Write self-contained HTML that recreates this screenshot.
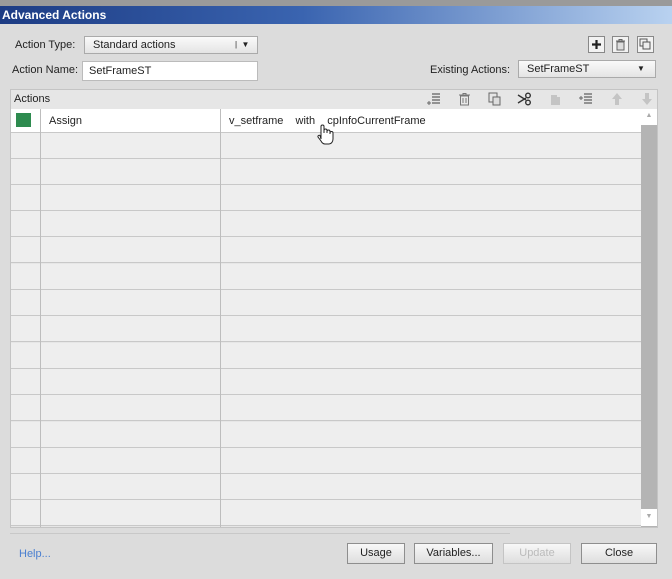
<!DOCTYPE html>
<html><head><style>
body{margin:0;width:672px;height:579px;background:#dcdcdc;font-family:"Liberation Sans",sans-serif;font-size:11px;color:#222;position:relative;overflow:hidden}
.a{position:absolute}
.top{left:0;top:0;width:672px;height:6px;background:#9a9a9a}
.title{left:0;top:6px;width:672px;height:18px;background:linear-gradient(90deg,#1d3c84 0%,#3a64b0 45%,#b9d2f0 100%);color:#fff;font-weight:bold;font-size:12px;line-height:18px;padding-left:2px;box-sizing:border-box}
.box{background:#fff;border:1px solid #bbb;box-sizing:border-box;line-height:18px;padding-left:6px}
.drop{background:linear-gradient(#fafafa,#e4e4e4);border:1px solid #aaa;box-sizing:border-box;line-height:16px;padding-left:8px}
.btn{background:linear-gradient(#f8f8f8,#dedede);border:1px solid #8e8e8e;box-sizing:border-box;text-align:center;line-height:19px;font-size:11px}
.row{left:11px;width:630px;height:26px;border-bottom:1px solid #c8c8c8;box-sizing:border-box;background:#eeeeee}
.ib{width:17px;height:17px;border:1px solid #888;background:#f2f2f2;box-sizing:border-box}
svg.ic{position:absolute;top:92px}
</style></head><body>
<div class="a top"></div>
<div class="a title">Advanced Actions</div>
<div class="a" style="left:15px;top:38px;line-height:14px">Action Type:</div>
<div class="a drop" style="left:84px;top:36px;width:174px;height:18px">Standard actions<span style="position:absolute;left:150px;font-size:8px">|&nbsp;&nbsp;▼</span></div>
<div class="a" style="left:12px;top:64px">Action Name:</div>
<div class="a box" style="left:82px;top:61px;width:176px;height:20px">SetFrameST</div>
<div class="a ib" style="left:588px;top:36px"><svg width="15" height="15"><path d="M7.5 3v9M3 7.5h9" stroke="#222" stroke-width="2.2"/></svg></div>
<div class="a ib" style="left:612px;top:36px"><svg width="15" height="15"><path d="M3 4h9M6 4V2.5h3V4M4 5h7v8H4z" stroke="#666" fill="#ddd"/></svg></div>
<div class="a ib" style="left:637px;top:36px"><svg width="15" height="15"><rect x="2" y="2" width="7" height="7" fill="none" stroke="#555"/><rect x="5" y="5" width="7" height="7" fill="#eee" stroke="#555"/></svg></div>
<div class="a" style="left:430px;top:64px">Existing Actions:</div>
<div class="a drop" style="left:518px;top:60px;width:138px;height:18px">SetFrameST<span style="position:absolute;left:118px;font-size:8px">▼</span></div>
<div class="a" style="left:10px;top:89px;width:648px;height:439px;border:1px solid #c4c4c4;background:#e6e6e6;box-sizing:border-box"></div>
<div class="a" style="left:14px;top:93px">Actions</div>
<svg class="ic" style="left:426px" width="16" height="14"><path d="M1 11h4M3 9v4" stroke="#666"/><path d="M6 2h8M6 5h8M6 8h8M6 11h8" stroke="#777" stroke-width="1.5"/></svg>
<svg class="ic" style="left:457px" width="16" height="14"><path d="M2 3h11M6 3V1.5h3V3M3.5 4h8v9h-8z" stroke="#777" fill="#e8e8e8"/><path d="M6 6v5M9 6v5" stroke="#777"/></svg>
<svg class="ic" style="left:487px" width="16" height="14"><rect x="2" y="1" width="8" height="9" fill="none" stroke="#666"/><rect x="6" y="5" width="7" height="8" fill="#ddd" stroke="#666"/></svg>
<svg class="ic" style="left:517px" width="16" height="14"><circle cx="11" cy="3.5" r="2.3" fill="none" stroke="#333" stroke-width="1.4"/><circle cx="11" cy="10.5" r="2.3" fill="none" stroke="#333" stroke-width="1.4"/><path d="M1 3l8 5M1 11l8-5" stroke="#333" stroke-width="1.4"/></svg>
<svg class="ic" style="left:548px" width="16" height="14"><path d="M3 3h6v2h3v8H3z" fill="#c4c4c4"/></svg>
<svg class="ic" style="left:578px" width="16" height="14"><path d="M1 6h4M3 4v4" stroke="#666"/><path d="M6 2h8M6 5h8M6 8h8M6 11h8" stroke="#777" stroke-width="1.5"/></svg>
<svg class="ic" style="left:609px" width="16" height="14"><path d="M8 1l5 6H10v6H6V7H3z" fill="#c4c4c4"/></svg>
<svg class="ic" style="left:639px" width="16" height="14"><path d="M8 13l5-6H10V1H6v6H3z" fill="#c4c4c4"/></svg>
<div class="a row" style="top:109px;height:24px;background:#fff"></div>
<div class="a" style="left:16px;top:113px;width:15px;height:14px;background:#2e8b4f"></div>
<div class="a" style="left:49px;top:115px">Assign</div>
<div class="a" style="left:229px;top:115px;word-spacing:3px">v_setframe&nbsp; with&nbsp; cpInfoCurrentFrame</div>
<div class="a row" style="top:133px"></div><div class="a row" style="top:159px"></div><div class="a row" style="top:185px"></div><div class="a row" style="top:211px"></div><div class="a row" style="top:237px"></div><div class="a row" style="top:264px"></div><div class="a row" style="top:290px"></div><div class="a row" style="top:316px"></div><div class="a row" style="top:343px"></div><div class="a row" style="top:369px"></div><div class="a row" style="top:395px"></div><div class="a row" style="top:422px"></div><div class="a row" style="top:448px"></div><div class="a row" style="top:474px"></div><div class="a row" style="top:500px"></div>
<div class="a" style="left:40px;top:109px;width:1px;height:418px;background:#bdbdbd"></div>
<div class="a" style="left:220px;top:109px;width:1px;height:418px;background:#bdbdbd"></div>
<svg class="a" style="left:314px;top:121px" width="22" height="26"><path d="M7 18V5.5a1.5 1.5 0 0 1 3 0V12V9.5a1.5 1.5 0 0 1 3 0V12v-1.5a1.5 1.5 0 0 1 3 0V13v-1a1.5 1.5 0 0 1 3 0v6c0 3-2 5-4 5h-4c-2 0-3-1-4-3l-3-4a1.3 1.3 0 0 1 2-1.5z" fill="#fff" stroke="#222"/></svg>
<div class="a" style="left:641px;top:109px;width:16px;height:418px;background:#b4b4b4"></div>
<div class="a" style="left:641px;top:109px;width:16px;height:16px;background:#fff;font-size:7px;color:#aaa;text-align:center;line-height:14px">▲</div>
<div class="a" style="left:641px;top:509px;width:16px;height:17px;background:#fff;font-size:7px;color:#aaa;text-align:center;line-height:16px">▼</div>
<div class="a" style="left:10px;top:533px;width:500px;height:1px;background:#c8c8c8"></div>
<div class="a" style="left:19px;top:548px;color:#4a7fd0">Help...</div>
<div class="a btn" style="left:347px;top:543px;width:58px;height:21px">Usage</div>
<div class="a btn" style="left:414px;top:543px;width:79px;height:21px">Variables...</div>
<div class="a btn" style="left:503px;top:543px;width:68px;height:21px;color:#bbb;border-color:#c4c4c4">Update</div>
<div class="a btn" style="left:581px;top:543px;width:76px;height:21px">Close</div>
</body></html>
